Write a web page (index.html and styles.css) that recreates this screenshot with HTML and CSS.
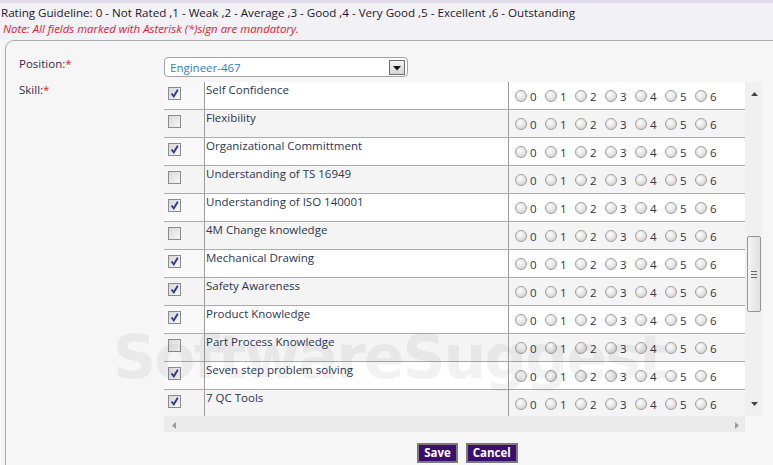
FILE: index.html
```html
<!DOCTYPE html>
<html>
<head>
<meta charset="utf-8">
<link rel="stylesheet" href="styles.css">
</head>
<body>
<header class="top">
  <div class="guide">Rating Guideline: 0 - Not Rated ,1 - Weak ,2 - Average ,3 - Good ,4 - Very Good ,5 - Excellent ,6 - Outstanding</div>
  <div class="note">Note: All fields marked with Asterisk (*)sign are mandatory.</div>
</header>
<main class="panel">
  <div class="form">
    <label class="lbl">Position:<span class="req">*</span></label>
    <div class="select">
      <span class="select-val">Engineer-467</span>
      <span class="select-btn"><svg width="8" height="5" viewBox="0 0 8 5"><path d="M0 0H8L4 4.5Z" fill="#111"/></svg></span>
    </div>
    <label class="lbl lbl-skill">Skill:<span class="req">*</span></label>
    <div class="skillbox">
      <div class="grid-area">
        <div class="rows" id="rows"></div>
      </div>
      <div class="vscroll">
        <span class="arr"><svg width="7" height="4" viewBox="0 0 7 4"><path d="M0 4H7L3.5 0Z" fill="#444"/></svg></span>
        <div class="vtrack">
          <div class="vthumb"><svg width="6" height="7" viewBox="0 0 6 7"><path d="M0 .5H6M0 3.5H6M0 6.5H6" stroke="#666" stroke-width="1"/></svg></div>
        </div>
        <span class="arr"><svg width="7" height="4" viewBox="0 0 7 4"><path d="M0 0H7L3.5 4Z" fill="#444"/></svg></span>
      </div>
      <div class="hscroll">
        <span class="harr"><svg width="4" height="7" viewBox="0 0 4 7"><path d="M4 0V7L0 3.5Z" fill="#999"/></svg></span>
        <span class="harr"><svg width="4" height="7" viewBox="0 0 4 7"><path d="M0 0V7L4 3.5Z" fill="#999"/></svg></span>
      </div>
      <div class="corner"></div>
    </div>
    <div></div>
    <div class="actions">
      <button class="btn">Save</button>
      <button class="btn">Cancel</button>
    </div>
  </div>
  <div class="watermark" aria-hidden="true">SoftwareSuggest</div>
</main>
<script src="app.js"></script>
</body>
</html>
```
FILE: app.js
```js
const skills = [
  ["Self Confidence", true],
  ["Flexibility", false],
  ["Organizational Committment", true],
  ["Understanding of TS 16949", false],
  ["Understanding of ISO 140001", true],
  ["4M Change knowledge", false],
  ["Mechanical Drawing", true],
  ["Safety Awareness", true],
  ["Product Knowledge", true],
  ["Part Process Knowledge", false],
  ["Seven step problem solving", true],
  ["7 QC Tools", true]
];
const check = '<svg width="11" height="11" viewBox="0 0 11 11"><path d="M2.5 5.5L4.8 8.3L8.8 1.8" fill="none" stroke="#2c3a94" stroke-width="1.9"/></svg>';
const rows = document.getElementById('rows');
skills.forEach(([name, on], i) => {
  const row = document.createElement('div');
  row.className = 'row' + (i % 2 ? ' alt' : '');
  let radios = '';
  for (let n = 0; n <= 6; n++) {
    radios += '<span class="opt"><span class="radio"></span><span class="num">' + n + '</span></span>';
  }
  row.innerHTML =
    '<div class="c1"><span class="cb">' + (on ? check : '') + '</span></div>' +
    '<div class="c2">' + name + '</div>' +
    '<div class="c3">' + radios + '</div>';
  rows.appendChild(row);
});
```
FILE: styles.css
```css
* { box-sizing: border-box; }
html, body { margin: 0; padding: 0; }
body {
  width: 773px;
  height: 465px;
  overflow: hidden;
  font-family: "Open Sans", "Liberation Sans", sans-serif;
  font-size: 12px;
  color: #222;
  background: #f6f6f6;
  position: relative;
}
.top {
  height: 40px;
  background: #f2f1f5;
  border-top: 3px solid #e0dbea;
  padding-left: 1px;
}
.guide {
  font-size: 11.6px;
  line-height: 15px;
  padding-top: 2px;
  color: #1c1730;
}
.note {
  font-size: 11.4px;
  line-height: 14px;
  padding-top: 2px;
  color: #e8202a;
  font-style: italic;
  padding-left: 2px;
}
.panel {
  margin-left: 5px;
  height: 425px;
  border-top: 1px solid #aaa;
  border-left: 1px solid #aaa;
  border-top-left-radius: 9px;
  background: #f6f6f6;
}
.form {
  display: grid;
  grid-template-columns: 158px 1fr;
  row-gap: 5px;
  padding-top: 16px;
}
.lbl {
  padding-left: 13px;
  font-size: 11.5px;
  line-height: 14px;
  color: #3b2450;
}
.lbl-skill { padding-top: 1px; }
.req { color: #f01818; }
.select {
  width: 244px;
  height: 20px;
  border: 1px solid #a3a3a3;
  border-radius: 4px;
  background: #fff;
  display: flex;
  align-items: center;
  justify-content: space-between;
  padding: 0 2px 0 5px;
}
.select-val { color: #2f7fc0; font-size: 11.5px; }
.select-btn {
  width: 16px;
  height: 15px;
  border: 1px solid #6d6d6d;
  background: linear-gradient(#f4f4f4, #d4d4d4);
  display: flex;
  align-items: center;
  justify-content: center;
  padding-top: 2px;
}
.skillbox {
  display: grid;
  grid-template-columns: 581px 17px;
  grid-template-rows: 334px 16px;
}
.grid-area {
  overflow: hidden;
  background: #fff;
}
.row {
  display: grid;
  grid-template-columns: 41px 304px 236px;
  height: 28px;
  border-bottom: 1px solid #acacac;
  background: #fff;
}
.row.alt { background: #f4f4f4; }
.c1 {
  border-right: 1px solid #9c9c9c;
  background: #f8f8f8;
  padding: 5px 0 0 4px;
}
.row.alt .c1 { background: #f4f4f4; }
.cb {
  display: flex;
  align-items: center;
  justify-content: center;
  width: 13px;
  height: 13px;
  border: 1px solid #8a8a8a;
  background: linear-gradient(135deg, #d8d8d8, #f7f7f7);
}
.c2 {
  border-right: 1px solid #9c9c9c;
  padding: 0 0 0 1px;
  line-height: 16px;
  color: #2a3556;
  font-size: 11.5px;
}
.c3 {
  display: flex;
  align-items: flex-end;
  padding: 0 0 6px 6px;
}
.opt {
  display: flex;
  align-items: flex-end;
  width: 30px;
  flex: none;
}
.radio {
  width: 12px;
  height: 12px;
  border-radius: 50%;
  border: 1px solid #a0a0a0;
  background: radial-gradient(circle at 40% 35%, #fdfdfd 0%, #e2e2e2 55%, #c4c4c4 100%);
  margin-bottom: 1px;
}
.num {
  margin-left: 3px;
  font-size: 11.5px;
  line-height: 12px;
  color: #2d3348;
}
.vscroll {
  background: #f0f0f0;
  display: flex;
  flex-direction: column;
  align-items: center;
  padding: 4px 0 4px 1px;
  grid-row: 1;
  grid-column: 2;
}
.arr { height: 16px; display: flex; align-items: center; }
.vtrack { flex: 1; width: 100%; padding-top: 134px; display: flex; justify-content: center; }
.vthumb {
  width: 14px;
  height: 76px;
  border: 1px solid #959595;
  border-radius: 2px;
  background: linear-gradient(90deg, #f4f4f4, #e0e0e0);
  display: flex;
  align-items: center;
  justify-content: center;
}
.hscroll {
  background: #ebebeb;
  display: flex;
  justify-content: space-between;
  align-items: center;
  padding: 0 6px 0 8px;
}
.corner { background: #f6f6f6; }
.actions {
  display: flex;
  justify-content: center;
  gap: 8px;
  padding-top: 6px;
  padding-right: 2px;
}
.btn {
  font-family: "Open Sans", "Liberation Sans", sans-serif;
  font-size: 11.5px;
  font-weight: bold;
  color: #fff;
  background: #3c0c6e;
  border: 2px solid #7a7a7a;
  height: 20px;
  padding: 0 5px;
  line-height: 14px;
  margin: 0;
}
.watermark {
  position: absolute;
  left: 113px;
  top: 322px;
  font-family: "DejaVu Sans", "Open Sans", sans-serif;
  font-size: 60px;
  font-weight: bold;
  letter-spacing: -2px;
  color: rgba(0, 0, 0, 0.05);
  pointer-events: none;
  white-space: nowrap;
}
```
